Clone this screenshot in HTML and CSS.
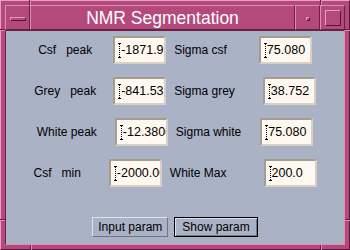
FILE: index.html
```html
<!DOCTYPE html>
<html lang="en">
<head>
<meta charset="UTF-8">
<title>NMR Segmentation</title>
<link rel="stylesheet" href="styles.css">
</head>
<body>

<div class="window">
    <span class="notch notch-v" style="left:28px;top:-1px"></span>
    <span class="notch notch-v" style="left:319px;top:-1px"></span>
    <span class="notch notch-v" style="left:29px;bottom:-1px"></span>
    <span class="notch notch-v" style="left:319px;bottom:-1px"></span>
    <span class="notch notch-h" style="left:-1px;top:28px"></span>
    <span class="notch notch-h" style="left:-1px;top:218px"></span>
    <span class="notch notch-h" style="right:-1px;top:28px"></span>
    <span class="notch notch-h" style="right:-1px;top:218px"></span>

    <div class="titlebar">
        <div class="tb-btn"><span class="menu-bar"></span></div>
        <div class="tb-title">NMR Segmentation</div>
        <div class="tb-btn"><span class="min-dot"></span></div>
        <div class="tb-btn"><span class="max-box"></span></div>
    </div>

    <div class="content">
        <div class="row">
            <span class="lbl gap-21">Csf   peak</span>
            <div class="field"><svg class="caret" width="3" height="15" viewBox="0 0 3 15"><path d="M0 .5h3M0 14.5h3" stroke="#000"/><path d="M1.5 1v13" stroke="#000" stroke-dasharray="1 1"/></svg><span>-1871.93</span></div>
            <span class="lbl next gap-32">Sigma csf</span>
            <div class="field"><svg class="caret" width="3" height="15" viewBox="0 0 3 15"><path d="M0 .5h3M0 14.5h3" stroke="#000"/><path d="M1.5 1v13" stroke="#000" stroke-dasharray="1 1"/></svg><span>75.080</span></div>
        </div>
        <div class="row">
            <span class="lbl gap-17">Grey   peak</span>
            <div class="field"><svg class="caret" width="3" height="15" viewBox="0 0 3 15"><path d="M0 .5h3M0 14.5h3" stroke="#000"/><path d="M1.5 1v13" stroke="#000" stroke-dasharray="1 1"/></svg><span>-841.532</span></div>
            <span class="lbl next gap-28">Sigma grey</span>
            <div class="field"><svg class="caret" width="3" height="15" viewBox="0 0 3 15"><path d="M0 .5h3M0 14.5h3" stroke="#000"/><path d="M1.5 1v13" stroke="#000" stroke-dasharray="1 1"/></svg><span>38.752</span></div>
        </div>
        <div class="row">
            <span class="lbl gap-18">White peak</span>
            <div class="field"><svg class="caret" width="3" height="15" viewBox="0 0 3 15"><path d="M0 .5h3M0 14.5h3" stroke="#000"/><path d="M1.5 1v13" stroke="#000" stroke-dasharray="1 1"/></svg><span>-12.3800</span></div>
            <span class="lbl next gap-19">Sigma white</span>
            <div class="field"><svg class="caret" width="3" height="15" viewBox="0 0 3 15"><path d="M0 .5h3M0 14.5h3" stroke="#000"/><path d="M1.5 1v13" stroke="#000" stroke-dasharray="1 1"/></svg><span>75.080</span></div>
        </div>
        <div class="row">
            <span class="lbl gap-28">Csf   min</span>
            <div class="field"><svg class="caret" width="3" height="15" viewBox="0 0 3 15"><path d="M0 .5h3M0 14.5h3" stroke="#000"/><path d="M1.5 1v13" stroke="#000" stroke-dasharray="1 1"/></svg><span>-2000.00</span></div>
            <span class="lbl next gap-37">White Max</span>
            <div class="field"><svg class="caret" width="3" height="15" viewBox="0 0 3 15"><path d="M0 .5h3M0 14.5h3" stroke="#000"/><path d="M1.5 1v13" stroke="#000" stroke-dasharray="1 1"/></svg><span>200.0</span></div>
        </div>

        <div class="actions">
            <button class="btn">Input param</button>
            <button class="btn focus">Show param</button>
        </div>
    </div>
</div>

</body>
</html>
```

FILE: styles.css
```css
body {
    margin: 0;
    font-family: "Liberation Sans", Arial, sans-serif;
}

.window {
    position: relative;
    width: 350px;
    height: 250px;
    box-sizing: border-box;
    background: #b44a7c;
    border: 1px solid;
    border-color: #e8a0c4 #5a173a #5a173a #e8a0c4;
    padding: 4px;
    display: flex;
    flex-direction: column;
}

/* resize corner marks on the frame */
.notch {
    position: absolute;
}

.notch-v {
    width: 2px;
    height: 5px;
    background: linear-gradient(to right, #6a1f47 50%, #e08cb4 50%);
}

.notch-h {
    width: 5px;
    height: 2px;
    background: linear-gradient(to bottom, #6a1f47 50%, #e08cb4 50%);
}

.titlebar {
    display: flex;
    height: 25px;
}

.tb-btn, .tb-title {
    box-sizing: border-box;
    border: 1px solid;
    border-color: #e08cb4 #6a1f47 #6a1f47 #e08cb4;
}

.tb-btn {
    width: 25px;
    display: flex;
    align-items: center;
    justify-content: center;
}

.tb-title {
    flex: 1;
    color: #fff;
    font-size: 17.5px;
    line-height: 20px;
    padding-top: 2px;
    text-align: center;
}

.menu-bar {
    width: 16px;
    height: 4px;
    box-sizing: border-box;
    border: 1px solid;
    border-color: #e89cc0 #5a173a #5a173a #e89cc0;
    margin-top: 2px;
}

.min-dot {
    width: 4px;
    height: 4px;
    box-sizing: border-box;
    border: 1px solid;
    border-color: #e89cc0 #5a173a #5a173a #e89cc0;
    margin-top: 2px;
}

.max-box {
    width: 16px;
    height: 16px;
    box-sizing: border-box;
    border: 1px solid;
    border-color: #e89cc0 #5a173a #5a173a #e89cc0;
}

.content {
    flex: 1;
    background: #aab2c6;
    border: 1px solid;
    border-color: #6a1f47 #e08cb4 #e08cb4 #6a1f47;
    padding-top: 5px;
    display: flex;
    flex-direction: column;
    gap: 13px;
}

.row {
    display: flex;
    justify-content: center;
    align-items: center;
    height: 28px;
}

.lbl {
    font-size: 12px;
    white-space: pre;
    color: #000;
}

.lbl.next {
    margin-left: 8px;
}

.gap-17 { padding-right: 17px; }
.gap-18 { padding-right: 18px; }
.gap-19 { padding-right: 19px; }
.gap-21 { padding-right: 21px; }
.gap-28 { padding-right: 28px; }
.gap-32 { padding-right: 32px; }
.gap-37 { padding-right: 37px; }

.field {
    width: 53px;
    height: 28px;
    box-sizing: border-box;
    border: 2px solid;
    border-color: #a49c8e #d8d0c4 #d8d0c4 #a49c8e;
    background: #fff8f0;
    padding-left: 3px;
    display: flex;
    align-items: center;
    overflow: hidden;
    white-space: nowrap;
    font-size: 12.5px;
    color: #000;
}

.caret {
    flex-shrink: 0;
    margin-right: 0;
}

.actions {
    display: flex;
    justify-content: center;
    gap: 6px;
    margin-top: 17px;
}

.btn {
    height: 20px;
    box-sizing: border-box;
    font-family: "Liberation Sans", Arial, sans-serif;
    font-size: 12px;
    color: #000;
    background: #aab2c6;
    border: 1px solid;
    border-color: #dde1ea #6f7688 #6f7688 #dde1ea;
    padding: 0 5px;
}

.btn.focus {
    border: 1px solid #000;
    box-shadow: inset 1px 1px #dde1ea, inset -1px -1px #6f7688;
    padding: 0 7px;
}
```
